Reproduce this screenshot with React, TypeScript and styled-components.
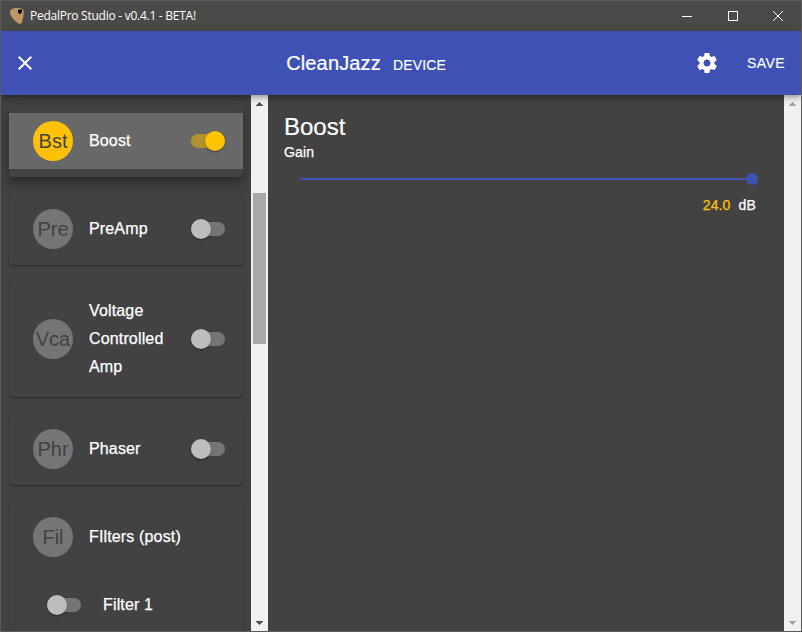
import React from "react";
import styled, { createGlobalStyle, css } from "styled-components";

const GlobalStyle = createGlobalStyle`
  *, *::before, *::after { box-sizing: border-box; }
  html, body { margin: 0; padding: 0; overflow: hidden; background: #424242; }
`;

const Window = styled.div`
  display: flex;
  flex-direction: column;
  width: 802px;
  height: 632px;
  border: 1px solid #5b5b5a;
  overflow: hidden;
  background: #424242;
  color: #fff;
  font-family: "Liberation Sans", Arial, sans-serif;
`;

const TitleBar = styled.div`
  display: flex;
  align-items: center;
  flex: 0 0 30px;
  padding-left: 8px;
  background: #4b4a48;
`;

const WindowTitle = styled.span`
  flex: 1;
  margin-left: 5px;
  font: 12px/16px "Open Sans", "Noto Sans", sans-serif;
  letter-spacing: -0.26px;
  white-space: nowrap;
`;

const WindowButton = styled.div`
  display: flex;
  align-items: center;
  justify-content: center;
  width: 46px;
  height: 30px;

  &:nth-last-child(2) {
    width: 45px;
  }
`;

const AppBar = styled.header`
  position: relative;
  z-index: 1;
  display: flex;
  align-items: center;
  justify-content: space-between;
  flex: 0 0 64px;
  padding: 0 16px 0 12px;
  background: #3f51b5;
  box-shadow: 0 2px 4px -1px rgba(0, 0, 0, 0.2), 0 4px 5px 0 rgba(0, 0, 0, 0.14),
    0 1px 10px 0 rgba(0, 0, 0, 0.12);
`;

const PresetTitle = styled.div`
  display: flex;
  align-items: baseline;
  gap: 12px;
`;

const PresetName = styled.h1`
  margin: 0;
  font-size: 20px;
  font-weight: 400;
  line-height: 32px;
  letter-spacing: 0.15px;
  -webkit-text-stroke: 0.2px;
`;

const PresetSource = styled.span`
  font-size: 14px;
  letter-spacing: 0.15px;
  -webkit-text-stroke: 0.15px;
`;

const Actions = styled.div`
  display: flex;
  align-items: center;
  justify-content: flex-end;
  gap: 28px;
`;

const SaveButton = styled.button`
  padding: 0;
  border: 0;
  background: none;
  color: inherit;
  font: 14px/24px "Liberation Sans", Arial, sans-serif;
  letter-spacing: 0.4px;
  -webkit-text-stroke: 0.15px;
`;

const Content = styled.div`
  display: flex;
  flex: 1;
  min-height: 0;
`;

const Sidebar = styled.nav`
  display: flex;
  flex-direction: column;
  gap: 16px;
  width: 250px;
  padding: 10px 8px 0;
  overflow: hidden;
`;

const Card = styled.section<{ $selected?: boolean }>`
  flex: none;
  padding: 8px 0;
  border-radius: 4px;
  background: #424242;
  box-shadow: ${(p) =>
    p.$selected
      ? "0 5px 5px -3px rgba(0,0,0,.2), 0 8px 10px 1px rgba(0,0,0,.14), 0 3px 14px 2px rgba(0,0,0,.12)"
      : "0 1px 3px 0 rgba(0,0,0,.2), 0 1px 1px 0 rgba(0,0,0,.14), 0 2px 1px -1px rgba(0,0,0,.12)"};
`;

const PedalRow = styled.div<{ $selected?: boolean }>`
  display: flex;
  align-items: center;
  min-height: 56px;
  padding: 8px 18px 8px 24px;
  background: ${(p) => (p.$selected ? "#686868" : "transparent")};
`;

const Avatar = styled.div<{ $on?: boolean }>`
  display: flex;
  align-items: center;
  justify-content: center;
  flex: 0 0 40px;
  height: 40px;
  border-radius: 50%;
  background: ${(p) => (p.$on ? "#ffc107" : "#757575")};
  color: #424242;
  font-size: 20px;
`;

const PedalName = styled.span`
  flex: 1;
  margin: 0 16px;
  font-size: 16px;
  line-height: 28px;
  letter-spacing: 0.15px;
  -webkit-text-stroke: 0.25px;
`;

const SubRow = styled.div`
  display: flex;
  align-items: center;
  height: 48px;
  margin-top: 16px;
  padding-left: 38px;
`;

const SubName = styled(PedalName)`
  margin-left: 22px;
`;

const Track = styled.div<{ $on?: boolean }>`
  display: flex;
  align-items: center;
  flex: 0 0 34px;
  height: 14px;
  border-radius: 7px;
  ${(p) =>
    p.$on
      ? css`
          justify-content: flex-end;
          background: #b3932f;
        `
      : css`
          background: #757575;
        `}
`;

const Thumb = styled.div<{ $on?: boolean }>`
  flex: 0 0 20px;
  height: 20px;
  border-radius: 50%;
  background: ${(p) => (p.$on ? "#ffc400" : "#bdbdbd")};
  box-shadow: 0 1px 3px 0 rgba(0, 0, 0, 0.2), 0 1px 1px 0 rgba(0, 0, 0, 0.14),
    0 2px 1px -1px rgba(0, 0, 0, 0.12);
`;

const ScrollTrack = styled.div`
  display: flex;
  flex-direction: column;
  align-items: center;
  flex: 0 0 17px;
  background: #f1f1f1;
`;

const ScrollArrow = styled.div`
  display: flex;
  align-items: center;
  justify-content: center;
  flex: 0 0 17px;
`;

const ScrollSpace = styled.div<{ $height?: number }>`
  flex: ${(p) => (p.$height === undefined ? "1" : `0 0 ${p.$height}px`)};
`;

const ScrollThumb = styled.div`
  flex: 0 0 151px;
  width: 13px;
  background: #a8a8a8;
`;

const Editor = styled.main`
  flex: 1;
  padding: 16px;
`;

const EditorTitle = styled.h2`
  margin: 0;
  font-size: 24px;
  font-weight: 400;
  line-height: 32px;
  -webkit-text-stroke: 0.2px;
`;

const ControlLabel = styled.div`
  margin-top: -1px;
  font-size: 14px;
  line-height: 20px;
  letter-spacing: 0.15px;
  -webkit-text-stroke: 0.25px;
`;

const Slider = styled.div`
  display: flex;
  align-items: center;
  height: 12px;
  margin: 11px 10px 0 16px;
`;

const SliderRail = styled.div`
  flex: 1;
  height: 2px;
  background: #3f51b5;
`;

const SliderKnob = styled.div`
  flex: 0 0 12px;
  height: 12px;
  border-radius: 50%;
  background: #3f51b5;
`;

const Reading = styled.div`
  display: flex;
  justify-content: flex-end;
  gap: 8px;
  margin: 10px 12px 0 0;
  font-size: 14px;
  line-height: 20px;
  letter-spacing: 0.15px;
  -webkit-text-stroke: 0.25px;
`;

const ReadingValue = styled.span`
  color: #ffc107;
`;

function Switch({ on }: { on?: boolean }) {
  return (
    <Track $on={on}>
      <Thumb $on={on} />
    </Track>
  );
}

function Arrow({ down, color }: { down?: boolean; color: string }) {
  return (
    <ScrollArrow>
      <svg width="7" height="4" viewBox="0 0 7 4" fill={color} shapeRendering="crispEdges">
        <path
          d={down ? "M0 0h7v1H6v1H5v1H4v1H3V3H2V2H1V1H0z" : "M3 0h1v1h1v1h1v1h1v1H0V3h1V2h1V1h1z"}
        />
      </svg>
    </ScrollArrow>
  );
}

function Pedal({ code, name, on }: { code: string; name: string; on?: boolean }) {
  return (
    <Card $selected={on}>
      <PedalRow $selected={on}>
        <Avatar $on={on}>{code}</Avatar>
        <PedalName>{name}</PedalName>
        <Switch on={on} />
      </PedalRow>
    </Card>
  );
}

export default function App() {
  return (
    <>
      <GlobalStyle />
      <Window>
        <TitleBar>
          <svg width="16" height="18" viewBox="0 0 16 18">
            <path
              d="M1 5C1.500 2 4 1 8 1c3.500 0 6.500.8 6.700 3 .2 4-.9 9-2.200 12-.5 1.200-1.800 1.200-3 .5C5 13.500 .8 9 1 5z"
              fill="#bd9764"
            />
            <path d="M9 3l4-.8v3l-1 .2v1.400H9.800V6H9z" fill="#000" />
          </svg>
          <WindowTitle>PedalPro Studio - v0.4.1 - BETA!</WindowTitle>
          <WindowButton>
            <svg width="10" height="10" stroke="#fff" shapeRendering="crispEdges">
              <path d="M0 5.500h10" />
            </svg>
          </WindowButton>
          <WindowButton>
            <svg width="10" height="10" fill="none" stroke="#fff" shapeRendering="crispEdges">
              <path d="M.5 .5h9v9h-9z" />
            </svg>
          </WindowButton>
          <WindowButton>
            <svg width="10" height="10" stroke="#fff">
              <path d="M0 0l10 10M10 0L0 10" />
            </svg>
          </WindowButton>
        </TitleBar>

        <AppBar>
          <svg width="24" height="24" viewBox="0 0 24 24" fill="#fff">
            <path d="M19 6.410L17.590 5 12 10.590 6.410 5 5 6.410 10.590 12 5 17.590 6.410 19 12 13.410 17.590 19 19 17.590 13.410 12z" />
          </svg>
          <PresetTitle>
            <PresetName>CleanJazz</PresetName>
            <PresetSource>DEVICE</PresetSource>
          </PresetTitle>
          <Actions>
            <svg width="24" height="24" viewBox="0 0 24 24" fill="#fff">
              <path d="M19.430 12.980c.04-.32.07-.64.07-.98s-.03-.66-.07-.98l2.110-1.650c.19-.15.24-.42.12-.64l-2-3.460c-.12-.22-.39-.3-.61-.22l-2.490 1c-.52-.4-1.080-.73-1.690-.98l-.38-2.650C14.460 2.180 14.250 2 14 2h-4c-.25 0-.46.18-.49.42l-.38 2.650c-.61.25-1.170.59-1.690.98l-2.490-1c-.23-.09-.49 0-.61.22l-2 3.460c-.13.22-.07.49.12.64l2.110 1.650c-.04.32-.07.65-.07.98s.03.66.07.98l-2.110 1.650c-.19.15-.24.42-.12.64l2 3.460c.12.22.39.3.61.22l2.490-1c.52.4 1.080.73 1.690.98l.38 2.650c.03.24.24.42.49.42h4c.25 0 .46-.18.49-.42l.38-2.650c.61-.25 1.170-.59 1.690-.98l2.490 1c.23.09.49 0 .61-.22l2-3.460c.12-.22.07-.49-.12-.64l-2.110-1.650zM12 15.500c-1.930 0-3.500-1.570-3.500-3.500s1.570-3.500 3.500-3.500 3.500 1.570 3.500 3.500-1.570 3.500-3.500 3.500z" />
            </svg>
            <SaveButton>SAVE</SaveButton>
          </Actions>
        </AppBar>

        <Content>
          <Sidebar>
            <Pedal code="Bst" name="Boost" on />
            <Pedal code="Pre" name="PreAmp" />
            <Pedal code="Vca" name="Voltage Controlled Amp" />
            <Pedal code="Phr" name="Phaser" />
            <Card>
              <PedalRow>
                <Avatar>Fil</Avatar>
                <PedalName>FIlters (post)</PedalName>
              </PedalRow>
              <SubRow>
                <Switch />
                <SubName>Filter 1</SubName>
              </SubRow>
            </Card>
          </Sidebar>
          <ScrollTrack>
            <Arrow color="#505050" />
            <ScrollSpace $height={81} />
            <ScrollThumb />
            <ScrollSpace />
            <Arrow down color="#505050" />
          </ScrollTrack>
          <Editor>
            <EditorTitle>Boost</EditorTitle>
            <ControlLabel>Gain</ControlLabel>
            <Slider>
              <SliderRail />
              <SliderKnob />
            </Slider>
            <Reading>
              <ReadingValue>24.0</ReadingValue>
              <span>dB</span>
            </Reading>
          </Editor>
          <ScrollTrack>
            <Arrow color="#a3a3a3" />
            <ScrollSpace />
            <Arrow down color="#a3a3a3" />
          </ScrollTrack>
        </Content>
      </Window>
    </>
  );
}
